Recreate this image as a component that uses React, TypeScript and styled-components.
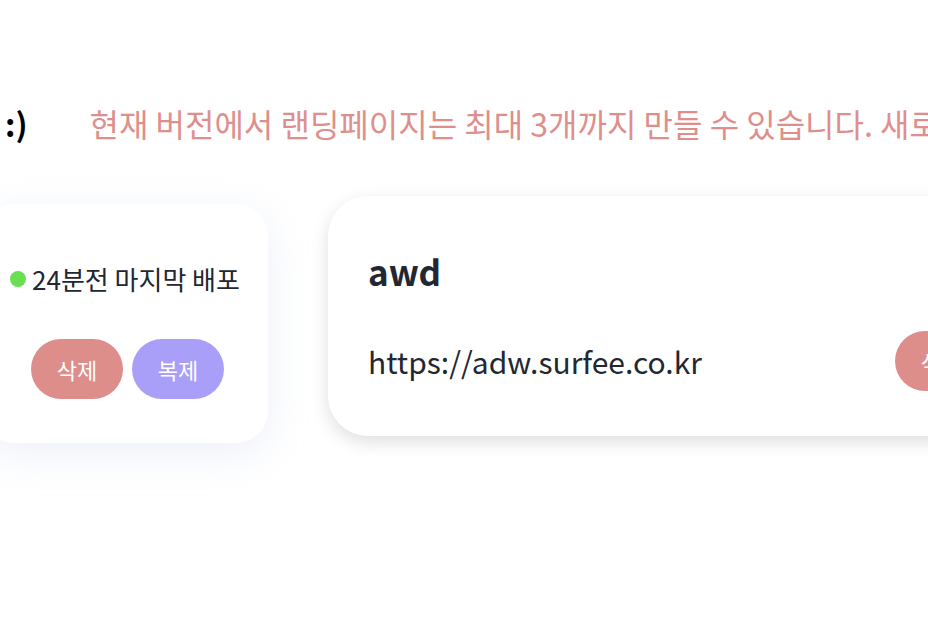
import * as React from 'react'
import styled, { createGlobalStyle } from 'styled-components'

const GlobalStyle = createGlobalStyle`
    html, body {
        margin: 0;
        padding: 0;
        background: #ffffff;
        overflow: hidden;
    }
    body {
        font-family: "Noto Sans CJK KR", "Noto Sans", sans-serif;
        color: #222731;
    }
`

const Page = styled.div`
    width: 928px;
    height: 620px;
    overflow: hidden;
`

const Header = styled.div`
    display: flex;
    align-items: center;
    height: 44px;
    margin-top: 101px;
    white-space: nowrap;
`

const Title = styled.h1`
    margin: 0 0 0 5px;
    font-size: 32px;
    font-weight: 700;
    line-height: 44px;
    color: #000;
`

const Notice = styled.p`
    margin: 0 0 0 62px;
    font-size: 32px;
    line-height: 44px;
    color: #de8f8c;
`

const CardRow = styled.div`
    display: flex;
    align-items: flex-start;
    gap: 60px;
    margin-top: 51px;
    margin-left: -18px;
`

const DeployCard = styled.div`
    flex: 0 0 auto;
    box-sizing: border-box;
    width: 286px;
    height: 239px;
    margin-top: 8px;
    padding-top: 60px;
    display: flex;
    flex-direction: column;
    align-items: center;
    background: #fff;
    border-radius: 32px;
    box-shadow: 0 10px 40px rgba(185, 200, 235, 0.28);
`

const Status = styled.div`
    display: flex;
    align-items: center;
    gap: 6px;
    font-size: 26px;
    line-height: 30px;
    white-space: nowrap;
`

const Dot = styled.span<{ $color: string }>`
    width: 16px;
    height: 16px;
    border-radius: 50%;
    background: ${p => p.$color};
`

const Buttons = styled.div`
    display: flex;
    gap: 9px;
    margin-top: 45px;
    margin-left: 5px;
`

const PillButton = styled.button<{ $color: string }>`
    width: 92px;
    height: 60px;
    border: none;
    border-radius: 30px;
    background: ${p => p.$color};
    color: #fff;
    font-family: inherit;
    font-size: 22px;
    padding: 0;
    flex: 0 0 auto;
`

const SiteCard = styled.div`
    flex: 0 0 auto;
    box-sizing: border-box;
    width: 699px;
    padding: 51px 40px 45px 40px;
    background: #fff;
    border-radius: 40px;
    box-shadow: 0 6px 18px rgba(0, 0, 0, 0.13);
`

const SiteName = styled.h2`
    margin: 0;
    font-size: 35px;
    font-weight: 700;
    line-height: 47px;
    color: #222731;
`

const UrlRow = styled.div`
    display: flex;
    align-items: center;
    justify-content: space-between;
    margin-top: 37px;
`

const Url = styled.span`
    font-size: 30px;
    line-height: 40px;
    color: #222731;
`

const App = () => {
    return (
        <Page>
            <GlobalStyle />
            <Header>
                <Title>:)</Title>
                <Notice>현재 버전에서 랜딩페이지는 최대 3개까지 만들 수 있습니다. 새로운 페이지를 만들려면 기존 페이지를 삭제해주세요.</Notice>
            </Header>
            <CardRow>
                <DeployCard>
                    <Status>
                        <Dot $color='#6adf52' />
                        24분전 마지막 배포
                    </Status>
                    <Buttons>
                        <PillButton $color='#dd8e8b'>삭제</PillButton>
                        <PillButton $color='#a99ef8'>복제</PillButton>
                    </Buttons>
                </DeployCard>
                <SiteCard>
                    <SiteName>awd</SiteName>
                    <UrlRow>
                        <Url>https://adw.surfee.co.kr</Url>
                        <PillButton $color='#dd8e8b'>삭제</PillButton>
                    </UrlRow>
                </SiteCard>
            </CardRow>
        </Page>
    )
}

export default App
